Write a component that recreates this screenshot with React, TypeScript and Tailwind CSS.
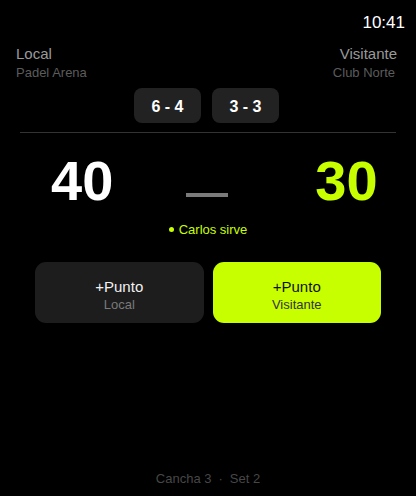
import React from 'react';

interface Side {
  name: string;
  club: string;
  points: string;
}

const local: Side = { name: 'Local', club: 'Padel Arena', points: '40' };
const visitor: Side = { name: 'Visitante', club: 'Club Norte', points: '30' };
const sets = ['6 - 4', '3 - 3'];

const App: React.FC = () => {
  return (
    <div
      className="flex h-[496px] w-[416px] flex-col bg-black text-white"
      style={{ fontFamily: '"Liberation Sans", Arial, sans-serif' }}
    >
      {/* Status clock */}
      <div className="flex justify-end pr-[11px] pt-[14px]">
        <span className="text-[17px] leading-none text-white">10:41</span>
      </div>

      {/* Team names */}
      <div className="mt-[15px] flex justify-between pl-4 pr-[19px]">
        <div className="flex flex-col">
          <span className="text-[15px] leading-none text-[#9a9a9a]">{local.name}</span>
          <span className="mt-[5px] text-[13px] leading-none text-[#5c5c5c]">{local.club}</span>
        </div>
        <div className="flex flex-col items-end">
          <span className="text-[15px] leading-none text-[#9a9a9a]">{visitor.name}</span>
          <span className="mt-[5px] pr-[2px] text-[13px] leading-none text-[#5c5c5c]">{visitor.club}</span>
        </div>
      </div>

      {/* Set scores */}
      <div className="mt-[9px] flex justify-center gap-[11px] pr-[3px]">
        {sets.map((s) => (
          <div
            key={s}
            className="flex h-[35px] w-[67px] items-center justify-center rounded-[8px] bg-[#222222] pt-[3px] text-[16px] font-bold leading-none text-white"
          >
            {s}
          </div>
        ))}
      </div>

      <div className="mx-5 mt-[9px] h-px bg-[#333333]" />

      {/* Current game points */}
      <div className="mt-[20px] flex items-start pl-[51px]">
        <span className="text-[56px] font-bold leading-none text-white">{local.points}</span>
        <div className="ml-[73px] mt-[40px] h-[4px] w-[42px] bg-[#7a7a7a]" />
        <span className="ml-[87px] text-[56px] font-bold leading-none text-[#c8ff00]">{visitor.points}</span>
      </div>

      {/* Server */}
      <div className="mt-[14px] flex items-center justify-center gap-[5px]">
        <span className="h-[5px] w-[5px] rounded-full bg-[#c8ff00]" />
        <span className="text-[13px] leading-none text-[#c8ff00]">Carlos sirve</span>
      </div>

      {/* Point buttons */}
      <div className="mx-[35px] mt-[26px] flex gap-[9px]">
        <button className="flex h-[61px] flex-1 flex-col items-center rounded-[11px] bg-[#1d1d1d] pt-[17px]">
          <span className="text-[15px] leading-none text-[#f2f2f2]">+Punto</span>
          <span className="mt-[4px] text-[13px] leading-none text-[#7a7a7a]">{local.name}</span>
        </button>
        <button className="flex h-[61px] flex-1 flex-col items-center rounded-[11px] bg-[#c8ff00] pt-[17px]">
          <span className="text-[15px] leading-none text-[#111111]">+Punto</span>
          <span className="mt-[4px] text-[13px] leading-none text-[#333333]">{visitor.name}</span>
        </button>
      </div>

      {/* Footer */}
      <div className="mt-auto flex justify-center gap-[7px] pb-[11px] text-[13px] leading-none text-[#474747]">
        <span>Cancha 3</span>
        <span>·</span>
        <span>Set 2</span>
      </div>
    </div>
  );
};

export default App;
